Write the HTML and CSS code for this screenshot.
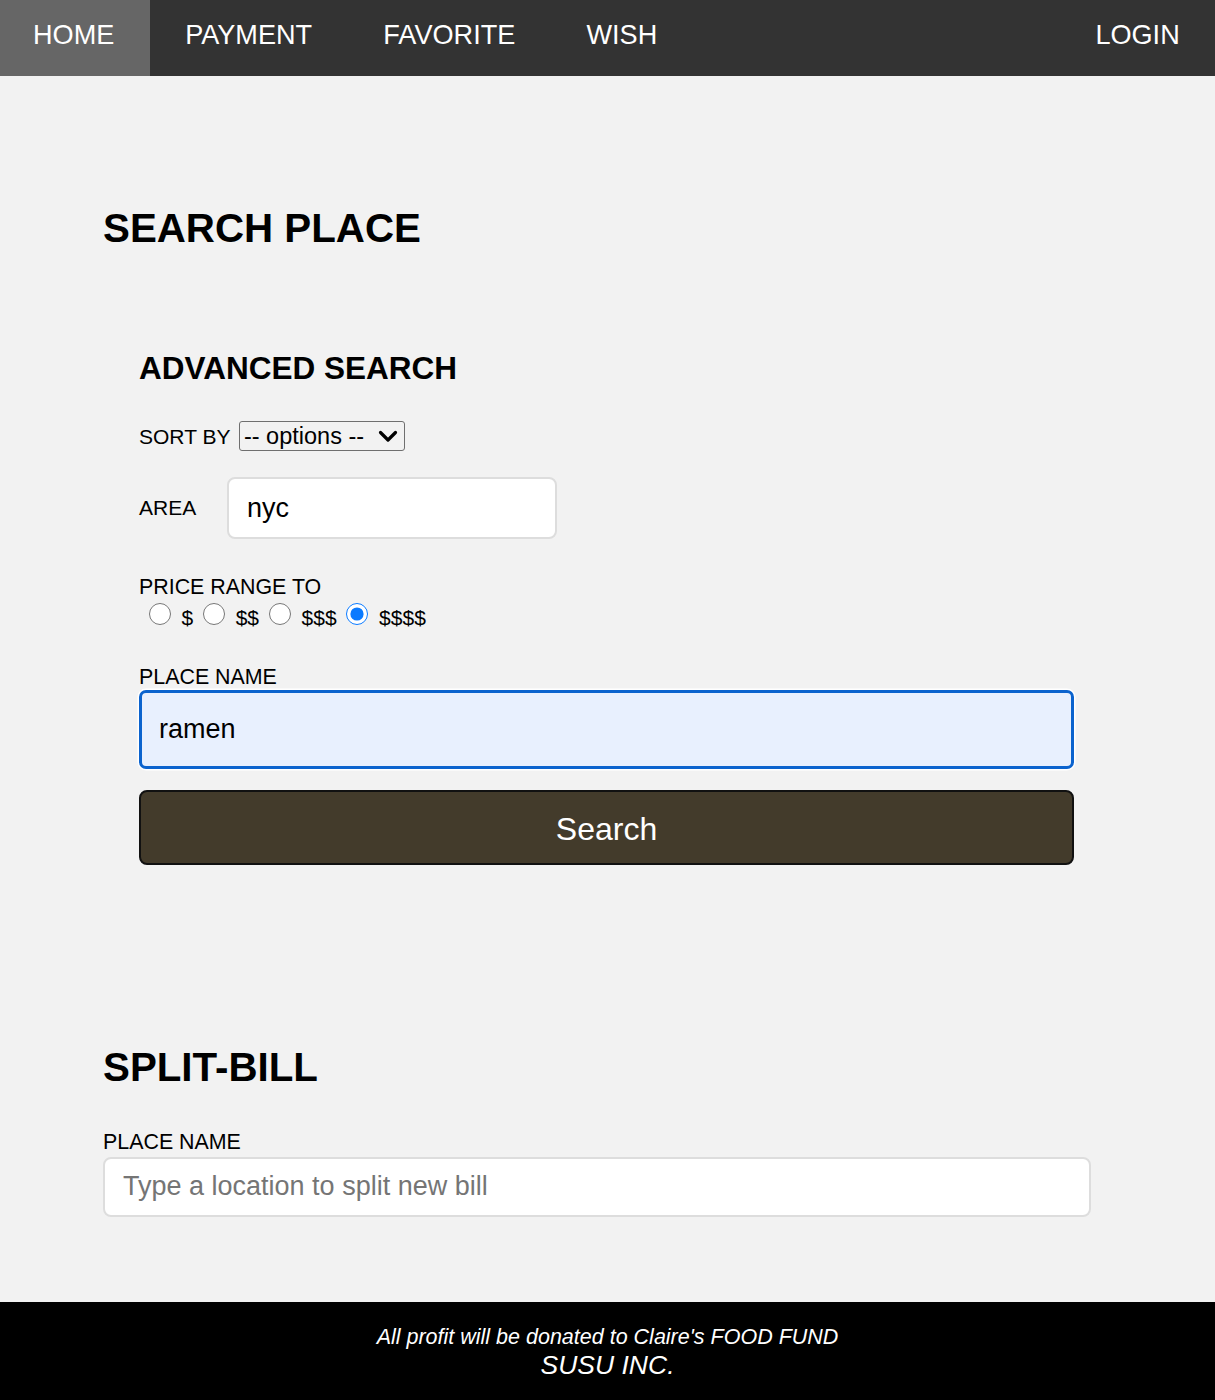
FILE: index.html
```html
<!DOCTYPE html>
<html lang="en">
<head>
<meta charset="utf-8">
<title>Search Place</title>
<link rel="stylesheet" href="styles.css">
</head>
<body>
<nav class="topnav">
  <a class="nav-item active" href="#">HOME</a>
  <a class="nav-item" href="#">PAYMENT</a>
  <a class="nav-item" href="#">FAVORITE</a>
  <a class="nav-item" href="#">WISH</a>
  <a class="nav-item login" href="#">LOGIN</a>
</nav>
<main class="page">
  <h1 class="section-title">SEARCH PLACE</h1>
  <section class="advanced">
    <h2 class="sub-title">ADVANCED SEARCH</h2>
    <div class="sort-row">
      <label class="row-label sort-label" for="sort">SORT BY</label>
      <span class="select-wrap">
        <select id="sort" class="sort-select"><option>-- options --</option></select>
        <svg class="chevron" width="20" height="13" viewBox="0 0 20 13"><polyline points="2.5,2.5 10,10 17.5,2.5" fill="none" stroke="#000" stroke-width="3.2" stroke-linecap="round" stroke-linejoin="round"/></svg>
      </span>
    </div>
    <div class="area-row">
      <label class="row-label area-label" for="area">AREA</label>
      <input id="area" class="field area-field" type="text" value="nyc">
    </div>
    <div class="field-label price-label">PRICE RANGE TO</div>
    <div class="radio-row"><input class="radio" type="radio" name="price" id="p1"><label for="p1">$</label><input class="radio" type="radio" name="price" id="p2"><label for="p2">$$</label><input class="radio" type="radio" name="price" id="p3"><label for="p3">$$$</label><input class="radio" type="radio" name="price" id="p4" checked><label for="p4">$$$$</label></div>
    <label class="field-label place-label" for="place">PLACE NAME</label>
    <input id="place" class="field place-field is-focused" type="text" value="ramen">
    <button class="search-btn" type="button">Search</button>
  </section>
  <h1 class="section-title split-title">SPLIT-BILL</h1>
  <label class="field-label split-label" for="split">PLACE NAME</label>
  <input id="split" class="field split-field" type="text" placeholder="Type a location to split new bill">
</main>
<footer class="footer">
  <div class="footer-note">All profit will be donated to Claire's FOOD FUND</div>
  <div class="footer-brand">SUSU INC.</div>
</footer>
</body>
</html>
```

FILE: styles.css
```css
* { box-sizing: border-box; }

html, body {
  margin: 0;
  padding: 0;
}

body {
  font-family: "Liberation Sans", Arial, Helvetica, sans-serif;
  background: #f2f2f2;
  color: #000;
}

input, select, button {
  font-family: "Liberation Sans", Arial, Helvetica, sans-serif;
}

/* ---------- nav ---------- */
.topnav {
  display: flex;
  background: #333333;
  height: 76px;
}

.nav-item {
  display: block;
  padding: 19px 35.6px 26px;
  line-height: 31px;
  font-size: 27.1px;
  color: #fff;
  text-decoration: none;
}

.nav-item.active {
  padding-left: 33px;
  padding-right: 35.3px;
  background: #666666;
}

.nav-item.login {
  margin-left: auto;
  padding-right: 35.3px;
}

/* ---------- main ---------- */
.page {
  padding: 130px 124px 85px 103px;
}

.section-title {
  margin: 0;
  font-size: 40.3px;
  line-height: 46px;
  font-weight: bold;
}

.advanced {
  margin-left: 36px;
  width: 935px;
}

.sub-title {
  margin: 99px 0 0;
  font-size: 31.5px;
  line-height: 35px;
  font-weight: bold;
}

.row-label,
.field-label {
  font-size: 21.4px;
  line-height: 24px;
}

.field-label {
  display: block;
}

.sort-row {
  display: flex;
  align-items: center;
  height: 30px;
  margin-top: 35px;
}

.sort-label {
  font-size: 21px;
  margin-right: 8.5px;
  margin-top: 1px;
}

.select-wrap {
  position: relative;
  display: inline-block;
  height: 30px;
}

.sort-select {
  appearance: none;
  -webkit-appearance: none;
  width: 166px;
  height: 30px;
  margin: 0;
  padding: 0 30px 0 4px;
  border: 1px solid #6f6f6f;
  border-radius: 3px;
  background: transparent;
  font-size: 23.5px;
  color: #000;
}

.chevron {
  position: absolute;
  right: 7px;
  top: 9px;
  pointer-events: none;
}

.area-row {
  display: flex;
  align-items: center;
  margin-top: 26px;
}

.area-label {
  width: 88px;
  font-size: 21px;
}

.field {
  display: block;
  margin: 0;
  border: 2px solid #dddddd;
  border-radius: 8px;
  background: #fff;
  font-size: 27px;
  color: #000;
  outline: none;
}

.area-field {
  width: 330px;
  height: 62px;
  padding: 0 18px;
}

.price-label {
  margin-top: 36px;
}

.radio-row {
  margin-top: 4px;
  font-size: 21px;
  line-height: 24px;
}

.radio {
  width: 22px;
  height: 22px;
  margin: 0 11px 0 9.5px;
  vertical-align: baseline;
  accent-color: #0a7aff;
}

.place-label {
  margin-top: 34.5px;
}

.place-field {
  width: 935px;
  height: 79px;
  margin-top: 1.5px;
  padding: 0 17px;
}

.place-field.is-focused {
  border: 3px solid #0b63ce;
  border-radius: 7px;
  background: #e8f0fe;
  box-shadow: 0 0 0 1.5px #ffffff;
}

.search-btn {
  display: block;
  width: 935px;
  height: 75px;
  margin-top: 21px;
  padding: 3px 0 0;
  border: 2px solid #111;
  border-radius: 8px;
  background: #433b2b;
  color: #fff;
  font-size: 32px;
  cursor: pointer;
}

.split-title {
  margin-top: 180px;
}

.split-label {
  margin-top: 38.5px;
}

.split-field {
  width: 988px;
  height: 60px;
  margin-top: 3px;
  padding: 0 18px;
}

.split-field::placeholder {
  color: #757575;
}

/* ---------- footer ---------- */
.footer {
  background: #000;
  color: #fff;
  text-align: center;
  font-style: italic;
  padding: 22px 0 24px;
}

.footer-note {
  font-size: 21.5px;
  line-height: 26px;
}

.footer-brand {
  font-size: 26.5px;
  line-height: 30px;
}
```
